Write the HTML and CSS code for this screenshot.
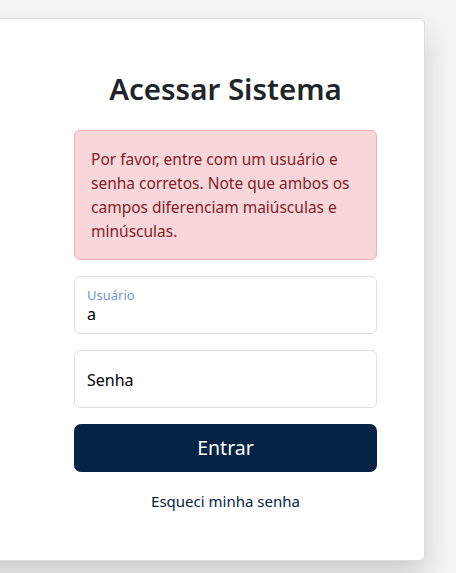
FILE: index.html
```html
<!DOCTYPE html>
<html lang="pt-BR">
<head>
<meta charset="utf-8">
<title>Acessar Sistema</title>
<link rel="stylesheet" href="styles.css">
</head>
<body>
<main class="page">
  <section class="card">
    <h2 class="title">Acessar Sistema</h2>
    <div class="alert">Por favor, entre com um usuário e senha corretos. Note que ambos os campos diferenciam maiúsculas e minúsculas.</div>
    <form class="form">
      <div class="field filled">
        <label class="field-label">Usuário</label>
        <span class="field-value">a</span>
      </div>
      <div class="field">
        <span class="field-placeholder">Senha</span>
      </div>
      <button type="button" class="btn">Entrar</button>
    </form>
    <a class="link" href="#">Esqueci minha senha</a>
  </section>
</main>
</body>
</html>
```
FILE: styles.css
```css
* { box-sizing: border-box; }
html, body { margin: 0; height: 100%; }
body {
  background: #f4f4f4;
  font-family: "Noto Sans", "Open Sans", sans-serif;
  color: #212529;
  overflow: hidden;
}
.page {
  padding-top: 18px;
}
.card {
  margin-left: -30px;
  width: 455px;
  height: 543px;
  background: #fff;
  border: 1px solid #dcdcdc;
  border-radius: 6px;
  box-shadow: 0 16px 30px rgba(0, 0, 0, 0.16);
  padding: 47px 47px 0 103px;
  display: flex;
  flex-direction: column;
}
.title {
  margin: 0;
  font-size: 29.5px;
  font-weight: 600;
  line-height: 1.2;
  text-align: center;
  color: #212529;
  height: 64px;
  padding-top: 5px;
}
.alert {
  margin-top: 0;
  background: #f8d7da;
  border: 1px solid #f1aeb5;
  border-radius: 6px;
  color: #842029;
  font-size: 15.5px;
  line-height: 24px;
  padding: 16px 16px 16px 16px;
}
.form {
  display: flex;
  flex-direction: column;
  gap: 16px;
  margin-top: 16px;
}
.field {
  height: 58px;
  border: 1px solid #dee2e6;
  border-radius: 6px;
  padding: 0 12px;
  display: flex;
  flex-direction: column;
  justify-content: center;
}
.field.filled {
  justify-content: flex-start;
  padding-top: 9px;
}
.field-label {
  font-size: 13px;
  line-height: 18px;
  color: #7097c8;
}
.field-value {
  font-size: 16px;
  line-height: 20px;
  color: #000;
}
.field-placeholder {
  font-size: 16px;
  line-height: 20px;
  color: #000;
  padding-top: 2px;
}
.btn {
  height: 48px;
  border: none;
  border-radius: 7px;
  background: #052344;
  color: #fff;
  font-family: inherit;
  font-size: 19.5px;
  line-height: 1;
}
.link {
  margin-top: 19px;
  text-align: center;
  font-size: 15px;
  color: #052344;
  text-decoration: none;
}
```
